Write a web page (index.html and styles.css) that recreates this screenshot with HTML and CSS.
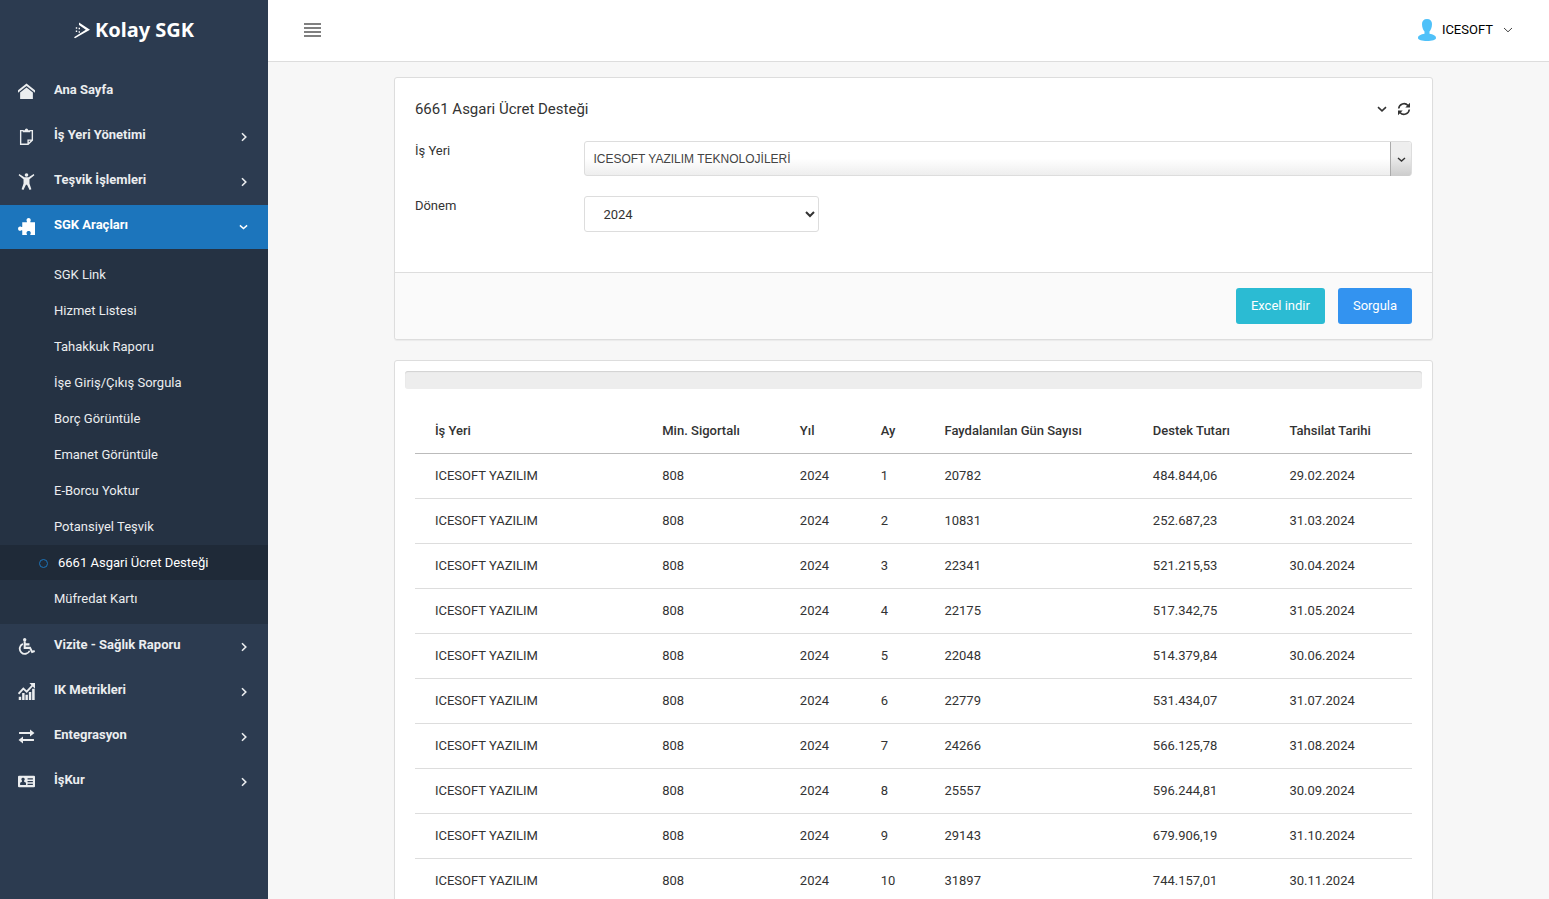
FILE: index.html
```html
<!DOCTYPE html>
<html lang="tr">
<head>
<meta charset="utf-8">
<meta name="viewport" content="width=device-width, initial-scale=1">
<title>Kolay SGK - 6661 Asgari Ücret Desteği</title>
<link rel="stylesheet" href="styles.css">
</head>
<body>
<svg class="sprite" aria-hidden="true">
  <symbol id="right" viewBox="0 0 8 10"><path d="M2 1.2 5.8 5 2 8.8" fill="none" stroke="currentColor" stroke-width="1.6"/></symbol>
  <symbol id="down" viewBox="0 0 10 8"><path d="M1 2.2 5 5.8 9 2.2" fill="none" stroke="currentColor" stroke-width="1.6"/></symbol>
</svg>
<div class="shell">
  <aside class="sidebar">
    <a class="brand" href="#">
      <svg class="brand-mark" viewBox="0 0 16 17" aria-hidden="true"><path d="M5 .5 16 7.800 1 16.300 0 15.200 11.800 7.800 5 3z" fill="currentColor"/><path d="M1.800 5.300h1.400v1.400H1.800zM4.600 5.800H6v1.400H4.600zM1.800 8.500h1.400v1.400H1.800zM4.600 9.300H6v1.400H4.600z" fill="currentColor"/></svg>
      <span>Kolay SGK</span>
    </a>
    <nav class="menu">
      <a class="item" href="#">
        <svg class="icon" viewBox="0 0 16 16"><path d="M8 .5 0 6.800v2.300L8 2.900l8 6.200V6.800z" fill="currentColor"/><path d="M2 9 8 4.300 14 9v6H2z" fill="currentColor"/></svg>
        <span>Ana Sayfa</span>
      </a>
      <a class="item" href="#">
        <svg class="icon" viewBox="0 0 16 16"><path d="M5 2.500H2.500v12.800h7l4-3.900V2.500H11M9.500 15v-3.600h3.800" fill="none" stroke="currentColor" stroke-width="1.300"/><path d="M4.500 4V2H6.500a1.500 1.500 0 0 1 3 0h2v2z" fill="currentColor"/></svg>
        <span>İş Yeri Yönetimi</span>
        <svg class="caret"><use href="#right"/></svg>
      </a>
      <a class="item" href="#">
        <svg class="icon" viewBox="0 0 16 16"><circle cx="8" cy="1.900" r="1.700" fill="currentColor"/><path d="M.6 2.200 1.200 1 6 3.900h4L14.800 1l.6 1.200-4.600 3.600v4l1.800 5.600-1.700.5L8.500 11h-1l-2.400 4.900-1.700-.5 1.800-5.600v-4z" fill="currentColor"/></svg>
        <span>Teşvik İşlemleri</span>
        <svg class="caret"><use href="#right"/></svg>
      </a>
      <a class="item item-open" href="#" aria-expanded="true">
        <svg class="icon" viewBox="0 0 16 16"><path d="M4 4h4.300c.5-.6-.3-1-.3-2 0-2.600 4-2.600 4 0 0 1-.8 1.400-.3 2H16v12h-4.300c-.5-.7.300-1 .300-2 0-2.300-4-2.300-4 0 0 1 .8 1.300.3 2H4v-4.300C3.300 11.200 3 12 2 12c-2.600 0-2.600-4 0-4 1 0 1.300.8 2 .300z" fill="currentColor"/></svg>
        <span>SGK Araçları</span>
        <svg class="caret caret-down"><use href="#down"/></svg>
      </a>
      <div class="submenu">
        <a href="#">SGK Link</a>
        <a href="#">Hizmet Listesi</a>
        <a href="#">Tahakkuk Raporu</a>
        <a href="#">İşe Giriş/Çıkış Sorgula</a>
        <a href="#">Borç Görüntüle</a>
        <a href="#">Emanet Görüntüle</a>
        <a href="#">E-Borcu Yoktur</a>
        <a href="#">Potansiyel Teşvik</a>
        <a class="current" href="#" aria-current="page">6661 Asgari Ücret Desteği</a>
        <a href="#">Müfredat Kartı</a>
      </div>
      <a class="item" href="#">
        <svg class="icon" viewBox="0 0 16 16"><circle cx="6.300" cy="1.700" r="1.600" fill="currentColor"/><path d="M6.300 3v6.300h5l2 3.800 2.400-.9M6.500 6h4.300" fill="none" stroke="currentColor" stroke-width="1.900"/><path d="M4.600 5.500a4.900 4.900 0 1 0 6.400 6.500" fill="none" stroke="currentColor" stroke-width="1.700"/></svg>
        <span>Vizite - Sağlık Raporu</span>
        <svg class="caret"><use href="#right"/></svg>
      </a>
      <a class="item" href="#">
        <svg class="icon" viewBox="0 0 16 16"><path d="M.7 13h2.300v3H.7zM3.900 9.500h2.300V16H3.900zM7 11h2.300v5H7zM10.200 8.500h2.300V16h-2.300zM13.300 5.500h2.400V16h-2.400z" fill="currentColor"/><path d="M.5 10.200 5 5.200l3.200 3 5.500-6" fill="none" stroke="currentColor" stroke-width="1.700"/><path d="M10.700 0H16v5.300z" fill="currentColor"/></svg>
        <span>IK Metrikleri</span>
        <svg class="caret"><use href="#right"/></svg>
      </a>
      <a class="item" href="#">
        <svg class="icon" viewBox="0 0 16 16"><path d="M1 4.700h11.500M3.500 11.300H15" fill="none" stroke="currentColor" stroke-width="1.900"/><path d="M11.300 1.400 15.500 4.700l-4.200 3.300zM4.700 8 .5 11.300l4.200 3.300z" fill="currentColor"/></svg>
        <span>Entegrasyon</span>
        <svg class="caret"><use href="#right"/></svg>
      </a>
      <a class="item" href="#">
        <svg class="icon" viewBox="0 0 16 16"><path fill-rule="evenodd" d="M1 2.500h14a1 1 0 0 1 1 1v9a1 1 0 0 1-1 1H1a1 1 0 0 1-1-1v-9a1 1 0 0 1 1-1zM4.700 4.500a1.400 1.400 0 0 0-1 2.500v1.200L2 9.200v2h5.500v-2L5.800 8.200V7a1.400 1.400 0 0 0-1.100-2.500zM9 5v1.200h5V5zM9 7.500v1.200h5V7.500zM9 10v1.200h5V10z" fill="currentColor"/></svg>
        <span>İşKur</span>
        <svg class="caret"><use href="#right"/></svg>
      </a>
    </nav>
  </aside>

  <div class="main">
    <header class="topbar">
      <button class="toggle" type="button" aria-label="Menü"><i></i><i></i><i></i><i></i></button>
      <button class="user" type="button">
        <svg class="avatar" viewBox="0 0 18 22" aria-hidden="true"><path d="M9 0c3.300 0 5 2 5 5 0 3.500-1.200 6-2.500 7.500v2.300C15 15.500 18 16.500 18 19c0 2-4 3-9 3s-9-1-9-3c0-2.500 3-3.500 6.500-4.200v-2.300C5.200 11 4 8.500 4 5c0-3 1.700-5 5-5z" fill="currentColor"/></svg>
        <span>ICESOFT</span>
        <svg class="user-caret" viewBox="0 0 10 8" aria-hidden="true"><path d="M1 2 5 5.800 9 2" fill="none" stroke="currentColor"/></svg>
      </button>
    </header>

    <main class="page">
      <div class="column">
        <form class="card">
          <div class="card-head">
            <h1>6661 Asgari Ücret Desteği</h1>
            <div class="tools">
              <button type="button" aria-label="Daralt"><svg class="tool-down"><use href="#down"/></svg></button>
              <button type="button" aria-label="Yenile"><svg class="tool-sync" viewBox="0 0 14 14"><path d="M1.700 6.500A5.300 5.300 0 0 1 11 3.500M12.300 7.500A5.300 5.300 0 0 1 3 10.500" fill="none" stroke="currentColor" stroke-width="1.600"/><path d="M13 .8v4.800H8.300zM1 13.200V8.400h4.700z" fill="currentColor"/></svg></button>
            </div>
          </div>
          <div class="fields">
            <div class="field">
              <label for="workplace">İş Yeri</label>
              <div class="combo">
                <select id="workplace"><option>ICESOFT YAZILIM TEKNOLOJİLERİ</option></select>
                <span class="combo-arrow"><svg><use href="#down"/></svg></span>
              </div>
            </div>
            <div class="field">
              <label for="period">Dönem</label>
              <select id="period" class="period"><option>2024</option></select>
            </div>
          </div>
          <div class="card-foot">
            <button class="btn btn-teal" type="button">Excel indir</button>
            <button class="btn btn-blue" type="submit">Sorgula</button>
          </div>
        </form>

        <section class="card results">
          <div class="progress" role="progressbar" aria-label="İlerleme" aria-valuenow="0"></div>
          <table>
            <colgroup><col class="c-place"><col class="c-min"><col class="c-year"><col class="c-month"><col class="c-days"><col class="c-sum"><col class="c-date"></colgroup>
            <thead><tr><th>İş Yeri</th><th>Min. Sigortalı</th><th>Yıl</th><th>Ay</th><th>Faydalanılan Gün Sayısı</th><th>Destek Tutarı</th><th>Tahsilat Tarihi</th></tr></thead>
            <tbody>
              <tr><td>ICESOFT YAZILIM</td><td>808</td><td>2024</td><td>1</td><td>20782</td><td>484.844,06</td><td>29.02.2024</td></tr>
              <tr><td>ICESOFT YAZILIM</td><td>808</td><td>2024</td><td>2</td><td>10831</td><td>252.687,23</td><td>31.03.2024</td></tr>
              <tr><td>ICESOFT YAZILIM</td><td>808</td><td>2024</td><td>3</td><td>22341</td><td>521.215,53</td><td>30.04.2024</td></tr>
              <tr><td>ICESOFT YAZILIM</td><td>808</td><td>2024</td><td>4</td><td>22175</td><td>517.342,75</td><td>31.05.2024</td></tr>
              <tr><td>ICESOFT YAZILIM</td><td>808</td><td>2024</td><td>5</td><td>22048</td><td>514.379,84</td><td>30.06.2024</td></tr>
              <tr><td>ICESOFT YAZILIM</td><td>808</td><td>2024</td><td>6</td><td>22779</td><td>531.434,07</td><td>31.07.2024</td></tr>
              <tr><td>ICESOFT YAZILIM</td><td>808</td><td>2024</td><td>7</td><td>24266</td><td>566.125,78</td><td>31.08.2024</td></tr>
              <tr><td>ICESOFT YAZILIM</td><td>808</td><td>2024</td><td>8</td><td>25557</td><td>596.244,81</td><td>30.09.2024</td></tr>
              <tr><td>ICESOFT YAZILIM</td><td>808</td><td>2024</td><td>9</td><td>29143</td><td>679.906,19</td><td>31.10.2024</td></tr>
              <tr><td>ICESOFT YAZILIM</td><td>808</td><td>2024</td><td>10</td><td>31897</td><td>744.157,01</td><td>30.11.2024</td></tr>
            </tbody>
          </table>
        </section>
      </div>
    </main>
  </div>
</div>
</body>
</html>
```

FILE: styles.css
```css
* { box-sizing: border-box; }

body {
  margin: 0;
  background: #f7f7f7;
  color: #333;
  font: 13px/20px Roboto, sans-serif;
}

a { color: inherit; text-decoration: none; }
button { border: 0; padding: 0; background: none; color: inherit; font: inherit; cursor: pointer; }
svg { display: block; flex: none; }
.sprite { position: absolute; width: 0; height: 0; }

.shell { display: flex; height: 100vh; }

/* Sidebar */
.sidebar { flex: 0 0 268px; background: #2c3b50; color: #ebedef; overflow: hidden; }
.brand {
  display: flex;
  align-items: center;
  justify-content: center;
  gap: 5px;
  height: 60px;
  color: #fff;
  font: 700 20px/24px "Noto Sans", sans-serif;
}
.brand-mark { width: 16px; height: 17px; }
.menu { display: flex; flex-direction: column; gap: 1px; padding-top: 10px; }
.item {
  display: flex;
  gap: 19px;
  padding: 10px 20px 14px 18px;
  font-weight: 700;
}
.item span { flex: 1; }
.item-open { background: #1c75bc; color: #fff; margin-bottom: -1px; }
.icon { width: 17px; height: 17px; margin-top: 3px; }
.caret { width: 8px; height: 10px; margin-top: 7px; }
.caret-down { width: 9px; height: 8px; margin-top: 8px; }
.submenu {
  display: flex;
  flex-direction: column;
  gap: 1px;
  padding: 8px 0;
  background: #253243;
}
.submenu a { padding: 8px 20px 7px 54px; }
.submenu .current {
  display: flex;
  align-items: center;
  gap: 10px;
  padding-left: 39px;
  background: #1f2a38;
  color: #fff;
}
.submenu .current::before {
  content: "";
  width: 7px;
  height: 7px;
  border: 1px solid #1c75bc;
  border-radius: 50%;
}

/* Top bar */
.main { flex: 1; min-width: 0; overflow-y: auto; scrollbar-width: none; }
.topbar {
  display: flex;
  align-items: center;
  justify-content: space-between;
  height: 62px;
  padding: 0 36px 2px;
  border-bottom: 1px solid #ddd;
  background: #fff;
}
.toggle { display: grid; gap: 2px; width: 17px; }
.toggle i { height: 2px; background: #808080; }
.user { display: flex; align-items: center; gap: 6px; color: #000; }
.avatar { width: 18px; height: 22px; color: #4fc1f9; }
.user-caret { width: 10px; height: 8px; margin-left: 4px; color: #444; }

/* Page */
.page { display: grid; grid-template-columns: 1fr 10fr 1fr; padding: 15px 0 20px 10px; }
.column { grid-column: 2; display: grid; gap: 20px; padding: 0 10px; min-width: 0; }
.card {
  border: 1px solid #ddd;
  border-radius: 3px;
  background: #fff;
  box-shadow: 0 1px 1px rgba(0, 0, 0, .05);
}
.card-head { display: flex; align-items: center; justify-content: space-between; padding: 21px 20px 12px; }
h1 { margin: 0; font: 400 15px/20px Roboto, sans-serif; }
.tools { display: flex; align-items: center; gap: 10px; padding-right: 1px; }
.tool-down { width: 10px; height: 8px; }
.tool-sync { width: 14px; height: 14px; }
.fields { display: grid; gap: 20px; padding: 10px 20px 40px; }
.field {
  display: grid;
  grid-template-columns: 2fr 3fr 7fr;
  margin-right: -20px;
}
.combo { grid-column: 2 / 4; position: relative; margin-right: 20px; }
.combo select {
  display: block;
  appearance: none;
  width: 100%;
  height: 35px;
  padding: 0 30px 0 8px;
  border: 1px solid #ddd;
  border-radius: 3px;
  background: linear-gradient(#fff 50%, #eee);
  color: #444;
  font: 12px/20px "Liberation Sans", sans-serif;
}
.combo-arrow {
  position: absolute;
  inset: 1px 1px 0 auto;
  display: grid;
  place-items: center;
  width: 21px;
  border-left: 1px solid #aaa;
  border-radius: 0 3px 3px 0;
  background: linear-gradient(#eee 40%, #ccc);
  pointer-events: none;
}
.combo-arrow svg { width: 9px; height: 7px; }
.period {
  height: 36px;
  margin-right: 20px;
  padding: 0 0 0 14px;
  border: 1px solid #ddd;
  border-radius: 3px;
  background: #fff;
  color: #333;
  font: 13px/20px Roboto, sans-serif;
}
.card-foot {
  display: flex;
  justify-content: flex-end;
  gap: 13px;
  padding: 15px 20px;
  border-top: 1px solid #ddd;
  border-radius: 0 0 3px 3px;
  background: #fafafa;
}
.btn { padding: 8px 15px; border-radius: 3px; color: #fff; }
.btn-teal { background: #2bbbd3; }
.btn-blue { background: #3393f0; }

/* Results */
.results { padding: 10px 10px 20px; }
.progress { height: 18px; border-radius: 3px; background: #ededed; box-shadow: inset 0 1px 1px rgba(0, 0, 0, .12); }
table { width: calc(100% - 20px); margin: 20px 10px 0; border-collapse: collapse; table-layout: fixed; }
th, td { height: 45px; padding: 0 20px; text-align: left; border-bottom: 1px solid #ddd; white-space: nowrap; }
th { height: 44px; font-weight: 500; border-bottom-color: #bbb; }
.c-place { width: 22.8%; }
.c-min { width: 13.8%; }
.c-year { width: 8.1%; }
.c-month { width: 6.4%; }
.c-days { width: 20.9%; }
.c-sum { width: 13.7%; }
.c-date { width: 14.3%; }
```
